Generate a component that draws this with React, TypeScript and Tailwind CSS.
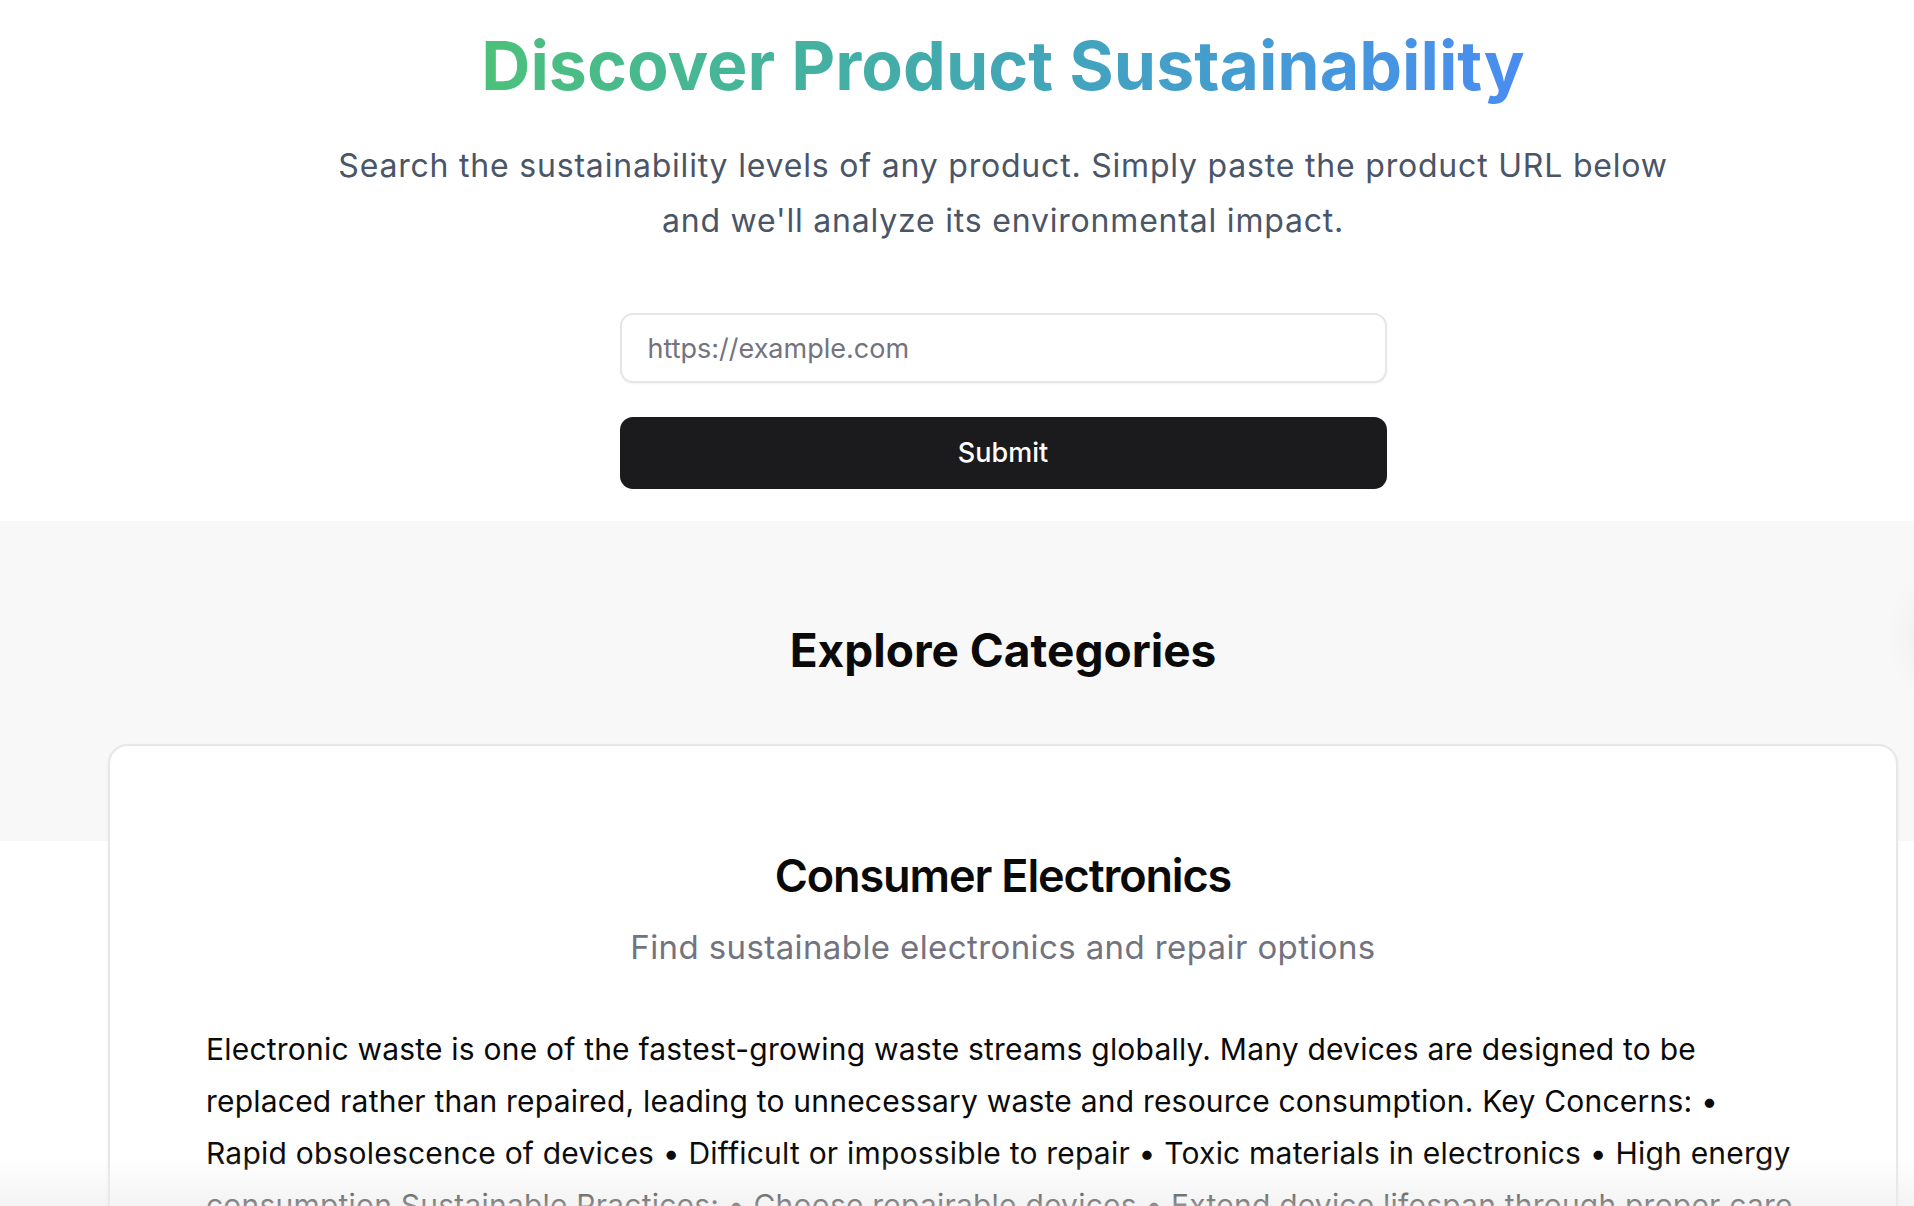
import React from "react";

export default function App() {
  return (
    <div
      className="relative w-full h-[1206px] overflow-hidden bg-white text-[#0a0a0a]"
      style={{ fontFamily: "Inter, 'Noto Sans', sans-serif" }}
    >
      <div className="relative w-[2006px]">
        {/* Hero */}
        <section className="flex flex-col items-center pt-[24px]">
          <h1 className="w-fit bg-gradient-to-r from-[#4cc17a] via-[#42a7b4] to-[#4a8cf2] bg-clip-text text-[68px] font-bold leading-[82px] text-transparent">
            Discover Product Sustainability
          </h1>
          <p className="mt-[32px] max-w-[1365px] text-center text-[32px] leading-[55px] tracking-[0.025em] text-[#4a5567]">
            Search the sustainability levels of any product. Simply paste the product URL below and we'll analyze its environmental impact.
          </p>
          <form
            className="mt-[65px] flex w-[767px] flex-col gap-[34px]"
            onSubmit={(e) => e.preventDefault()}
          >
            <input
              type="text"
              placeholder="https://example.com"
              className="h-[70px] w-full rounded-[13px] border-2 border-[#e6e6e8] bg-white px-[26px] text-[27px] text-[#0a0a0a] shadow-[0_1px_2px_rgba(0,0,0,0.05)] outline-none placeholder:text-[#737380]"
            />
            <button
              type="submit"
              className="h-[72px] w-full rounded-[13px] bg-[#1b1b1d] text-[27px] font-medium text-white"
            >
              Submit
            </button>
          </form>
        </section>

        {/* Categories */}
        <section className="mt-[32px] bg-[linear-gradient(to_bottom,#f8f8f8_320px,#ffffff_320px)] px-[108px] pt-[102px] pb-[80px]">
          <h2 className="text-center text-[46px] font-bold leading-[54px] text-[#0a0a0a]">
            Explore Categories
          </h2>
          <div className="mt-[67px] rounded-[20px] border-2 border-[#e7e7e9] bg-white px-[96px] pt-[103px] pb-[60px] shadow-[0_1px_3px_rgba(0,0,0,0.06)]">
            <h3 className="text-center text-[45px] font-semibold leading-[54px] tracking-[-0.025em] text-[#0a0a0a]">
              Consumer Electronics
            </h3>
            <p className="mt-[20px] text-center text-[33px] leading-[48px] tracking-[0.012em] text-[#737380]">
              Find sustainable electronics and repair options
            </p>
            <p className="mt-[52px] pr-[4px] text-[30px] leading-[52px] tracking-[0.007em] text-[#0a0a0a]">
              Electronic waste is one of the fastest-growing waste streams globally. Many devices are designed to be replaced rather than repaired, leading to unnecessary waste and resource consumption. Key Concerns: • Rapid obsolescence of devices • Difficult or impossible to repair • Toxic materials in electronics • High energy consumption Sustainable Practices: • Choose repairable devices • Extend device lifespan through proper care and maintenance • Recycle electronics responsibly • Buy refurbished when possible
            </p>
          </div>
        </section>

        {/* off-screen carousel control shadow */}
        <div className="absolute left-[1922px] top-[590px] h-[90px] w-[90px] rounded-full bg-white shadow-[0_0_40px_rgba(0,0,0,0.10)]" />
      </div>

      {/* bottom fade */}
      <div className="pointer-events-none absolute bottom-0 left-0 right-0 h-[50px] bg-gradient-to-b from-[rgba(240,240,240,0)] to-[rgba(236,236,236,0.6)]" />
    </div>
  );
}
